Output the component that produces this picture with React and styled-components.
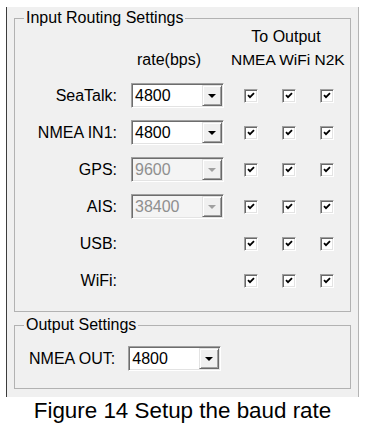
import styled, { createGlobalStyle } from "styled-components";

const GlobalStyle = createGlobalStyle`
  body {
    margin: 0;
    background: #fff;
    font-family: "Liberation Sans", Arial, sans-serif;
    color: #000;
  }
`;

const inputs = [
  { name: "SeaTalk:", rate: "4800" },
  { name: "NMEA IN1:", rate: "4800" },
  { name: "GPS:", rate: "9600", disabled: true },
  { name: "AIS:", rate: "38400", disabled: true },
  { name: "USB:" },
  { name: "WiFi:" },
];

function Combo({ value, disabled }) {
  return (
    <ComboBox $disabled={disabled}>
      <ComboText $disabled={disabled}>{value}</ComboText>
      <ComboButton>
        <Arrow $disabled={disabled} />
      </ComboButton>
    </ComboBox>
  );
}

function CheckBox() {
  return (
    <Check>
      <svg width="8" height="7" viewBox="0 0 8 7">
        <path d="M1 3.2 L3 5.2 L7 1.2" fill="none" stroke="#000" strokeWidth="1.8" />
      </svg>
    </Check>
  );
}

function App() {
  return (
    <>
      <GlobalStyle />
      <Window>
        <GroupBox>
          <Legend>Input Routing Settings</Legend>
          <HeadRow $h={20}>
            <span />
            <span />
            <ToOutput>To Output</ToOutput>
          </HeadRow>
          <HeadRow $h={30}>
            <span />
            <RateHead>rate(bps)</RateHead>
            <TargetsHead>NMEA WiFi N2K</TargetsHead>
          </HeadRow>
          {inputs.map((row) => (
            <Row key={row.name}>
              <Label>{row.name}</Label>
              <ComboCell>
                {row.rate && <Combo value={row.rate} disabled={row.disabled} />}
              </ComboCell>
              <CheckCell>
                <CheckBox />
              </CheckCell>
              <CheckCell>
                <CheckBox />
              </CheckCell>
              <CheckCell>
                <CheckBox />
              </CheckCell>
            </Row>
          ))}
        </GroupBox>
        <OutputBox>
          <Legend>Output Settings</Legend>
          <OutputRow>
            <Label>NMEA OUT:</Label>
            <Combo value="4800" />
          </OutputRow>
        </OutputBox>
      </Window>
      <Caption>Figure 14 Setup the baud rate</Caption>
    </>
  );
}

const Window = styled.div`
  box-sizing: border-box;
  margin: 7px 0 0 6px;
  width: 353px;
  padding: 2px 7px 8px 7px;
  background: #f0f0f0;
  border-left: 1px solid #3c3c3c;
  border-right: 1px solid #b4b4b4;
`;

const GroupBox = styled.fieldset`
  box-sizing: border-box;
  width: 337px;
  margin: 0;
  padding: 0 0 12px 0;
  border: 1px solid #b2b2b2;
  min-inline-size: 0;
`;

const OutputBox = styled(GroupBox)`
  margin-top: 4px;
  padding: 12px 0 17px 0;
`;

const Legend = styled.legend`
  margin-left: 9px;
  padding: 0 2px;
  font-size: 16px;
  line-height: 18px;
`;

const Row = styled.div`
  display: grid;
  grid-template-columns: 103px 113px 39px 38px 37px;
  height: 37px;
  font-size: 16px;
`;

const HeadRow = styled(Row)`
  height: ${(p) => p.$h}px;
`;

const ToOutput = styled.div`
  grid-column: 3 / span 3;
  text-align: center;
  line-height: 20px;
  padding-right: 4px;
`;

const RateHead = styled.div`
  padding-left: 19px;
  line-height: 26px;
`;

const TargetsHead = styled.div`
  grid-column: 3 / span 3;
  text-align: right;
  padding-right: 4px;
  line-height: 26px;
  font-size: 15.5px;
  white-space: nowrap;
`;

const Label = styled.div`
  font-size: 16px;
  line-height: 20px;
  text-align: right;
  padding-right: 1px;
  align-self: center;
  white-space: nowrap;
`;

const ComboCell = styled.div`
  display: flex;
  align-items: center;
  padding-left: 13px;
`;

const CheckCell = styled.div`
  display: flex;
  align-items: center;
  justify-content: center;
`;

const ComboBox = styled.div`
  box-sizing: border-box;
  display: flex;
  width: 93px;
  height: 25px;
  padding: 1px;
  background: ${(p) => (p.$disabled ? "#f4f4f4" : "#fff")};
  border: 1px solid;
  border-color: #a0a0a0 #fff #fff #a0a0a0;
  box-shadow: inset 1px 1px 0 #6d6d6d, inset -1px -1px 0 #e3e3e3;
`;

const ComboText = styled.div`
  flex: 1;
  padding-left: 2px;
  font-size: 16px;
  line-height: 21px;
  color: ${(p) => (p.$disabled ? "#8f8f8f" : "#000")};
`;

const ComboButton = styled.div`
  box-sizing: border-box;
  width: 20px;
  display: flex;
  align-items: center;
  justify-content: center;
  background: #f0f0f0;
  border: 1px solid;
  border-color: #e3e3e3 #696969 #696969 #e3e3e3;
  box-shadow: inset 1px 1px 0 #fff, inset -1px -1px 0 #a0a0a0;
`;

const Arrow = styled.span`
  width: 0;
  height: 0;
  border-left: 4px solid transparent;
  border-right: 4px solid transparent;
  border-top: 4px solid ${(p) => (p.$disabled ? "#a0a0a0" : "#000")};
`;

const Check = styled.span`
  box-sizing: border-box;
  display: flex;
  align-items: center;
  justify-content: center;
  width: 14px;
  height: 14px;
  background: #fff;
  border: 1px solid;
  border-color: #a0a0a0 #fff #fff #a0a0a0;
  box-shadow: inset 1px 1px 0 #696969, inset -1px -1px 0 #e3e3e3;
`;

const OutputRow = styled.div`
  display: flex;
  align-items: center;
  gap: 12px;
  height: 25px;
  padding-left: 14px;
`;

const Caption = styled.div`
  width: 353px;
  margin: 1px 0 0 6px;
  text-align: center;
  font-size: 22.4px;
  line-height: 26px;
`;

export default App;
